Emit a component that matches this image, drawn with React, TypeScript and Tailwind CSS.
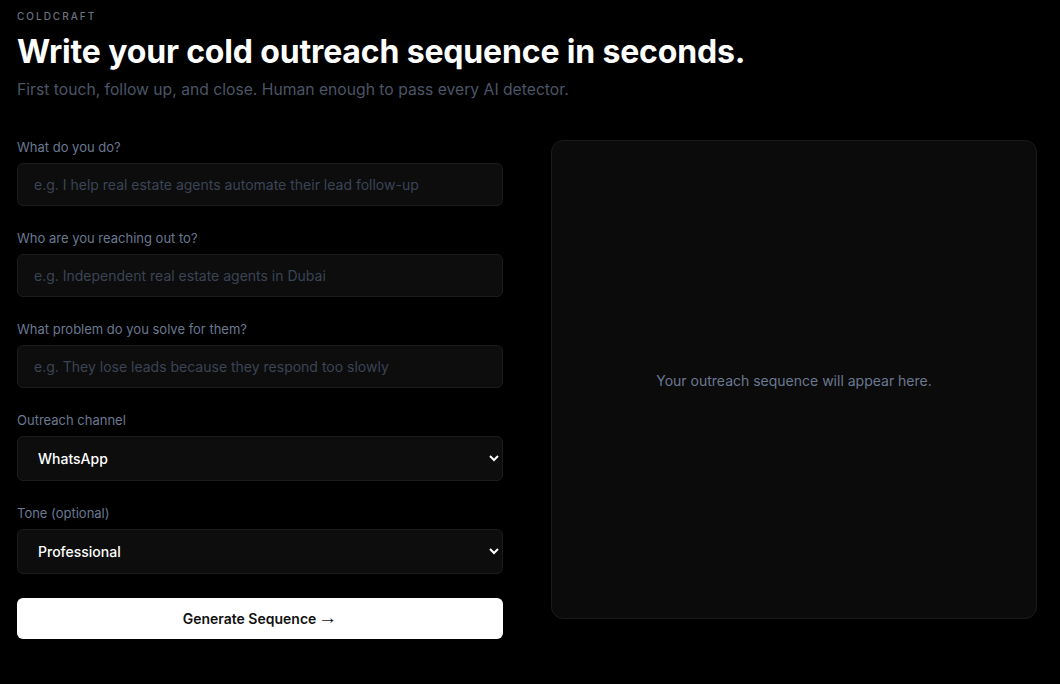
import React from "react";

const inputCls =
  "h-[43px] w-full rounded-md border border-[#1c1c1c] bg-[#0d0d0d] px-4 text-[14px] text-white placeholder:text-[#3b4455] outline-none";

const selectCls =
  "h-[45px] w-full rounded-md border border-[#1c1c1c] bg-[#0d0d0d] pl-[16px] pr-2 text-[14px] font-medium text-white outline-none [color-scheme:dark]";

function Field(props: { label: string; children: React.ReactNode }) {
  return (
    <div className="flex flex-col">
      <label className="mb-[8px] text-[13px] leading-[16px] text-[#6b7891]">
        {props.label}
      </label>
      {props.children}
    </div>
  );
}

export default function App() {
  return (
    <div
      className="min-h-[684px] w-full bg-black px-[17px] pt-[10px] text-white"
      style={{ fontFamily: "Inter, 'Noto Sans', sans-serif" }}
    >
      <p className="text-[10px] font-medium leading-[12px] tracking-[0.2em] text-[#6b7280]">
        COLDCRAFT
      </p>
      <h1 className="mt-[10px] text-[32px] font-bold leading-[40px] tracking-[-0.005em]">
        Write your cold outreach sequence in seconds.
      </h1>
      <p className="mt-[8px] text-[15.7px] leading-[20px] text-[#4b5566]">
        First touch, follow up, and close. Human enough to pass every AI detector.
      </p>

      <div className="mt-[39px] grid grid-cols-[486px_486px] gap-x-12">
        <div className="flex flex-col gap-[24px]">
          <Field label="What do you do?">
            <input
              className={inputCls}
              placeholder="e.g. I help real estate agents automate their lead follow-up"
            />
          </Field>
          <Field label="Who are you reaching out to?">
            <input
              className={inputCls}
              placeholder="e.g. Independent real estate agents in Dubai"
            />
          </Field>
          <Field label="What problem do you solve for them?">
            <input
              className={inputCls}
              placeholder="e.g. They lose leads because they respond too slowly"
            />
          </Field>
          <Field label="Outreach channel">
            <select className={selectCls} defaultValue="WhatsApp">
              <option>WhatsApp</option>
              <option>Email</option>
              <option>LinkedIn</option>
            </select>
          </Field>
          <Field label="Tone (optional)">
            <select className={selectCls} defaultValue="Professional">
              <option>Professional</option>
              <option>Casual</option>
              <option>Friendly</option>
            </select>
          </Field>
          <button className="flex h-[41px] w-full items-center justify-center gap-[2px] rounded-md bg-white text-[14px] font-semibold text-[#111111]">
            Generate Sequence
            <span
              className="mb-[3px] text-[19px] font-normal leading-none"
              style={{ fontFamily: "'Liberation Sans', Arial, sans-serif" }}
            >
              →
            </span>
          </button>
        </div>

        <div className="mt-[1px] flex h-[479px] items-center justify-center rounded-xl border border-[#1a1a1a] bg-[#0b0b0b] pt-[1px]">
          <p className="text-[14px] text-[#6b7891]">
            Your outreach sequence will appear here.
          </p>
        </div>
      </div>
    </div>
  );
}
